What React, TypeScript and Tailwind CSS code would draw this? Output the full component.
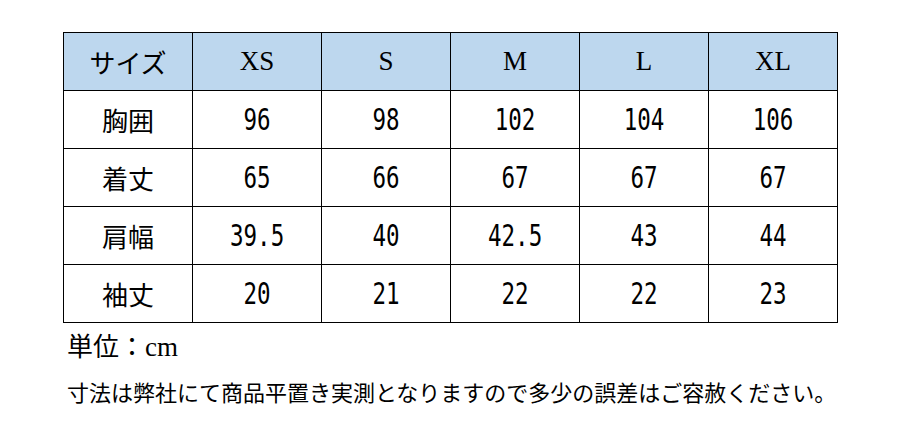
import React from "react";

const sizes = ["XS", "S", "M", "L", "XL"];
const rows: [string, string[]][] = [
  ["胸囲", ["96", "98", "102", "104", "106"]],
  ["着丈", ["65", "66", "67", "67", "67"]],
  ["肩幅", ["39.5", "40", "42.5", "43", "44"]],
  ["袖丈", ["20", "21", "22", "22", "23"]],
];

const cell =
  "w-[129px] h-[58px] border-r border-b border-black flex items-center justify-center";

export default function App() {
  return (
    <div className="w-[903px] h-[431px] bg-white text-black overflow-hidden font-['Noto_Sans_CJK_JP','Noto_Sans',sans-serif]">
      <div className="pt-[32px] pl-[63px]">
        <div className="flex flex-col w-[775px] border-l border-t border-black">
          <div className="flex bg-[#bdd7ee]">
            <div className={cell + " text-[26px] leading-none"}>サイズ</div>
            {sizes.map((s) => (
              <div
                key={s}
                className={
                  cell +
                  " text-[27px] leading-none font-['Liberation_Serif','Noto_Sans_CJK_JP',serif]"
                }
              >
                {s}
              </div>
            ))}
          </div>
          {rows.map(([label, vals]) => (
            <div key={label} className="flex bg-white">
              <div className={cell + " text-[26px] leading-none"}>{label}</div>
              {vals.map((v, i) => (
                <div key={i} className={cell}>
                  <span className="inline-block text-[30px] leading-none scale-x-[0.75] font-['DejaVu_Sans_Mono',monospace]">
                    {v}
                  </span>
                </div>
              ))}
            </div>
          ))}
        </div>
        <div className="mt-[7px] ml-[4px] text-[26px] leading-[30px] flex items-baseline">
          <span>単位：</span>
          <span className="text-[27px] font-['Liberation_Serif',serif]">cm</span>
        </div>
        <div className="mt-[14px] ml-[4px] text-[22px] leading-[30px] whitespace-nowrap">
          寸法は弊社にて商品平置き実測となりますので多少の誤差はご容赦ください。
        </div>
      </div>
    </div>
  );
}
